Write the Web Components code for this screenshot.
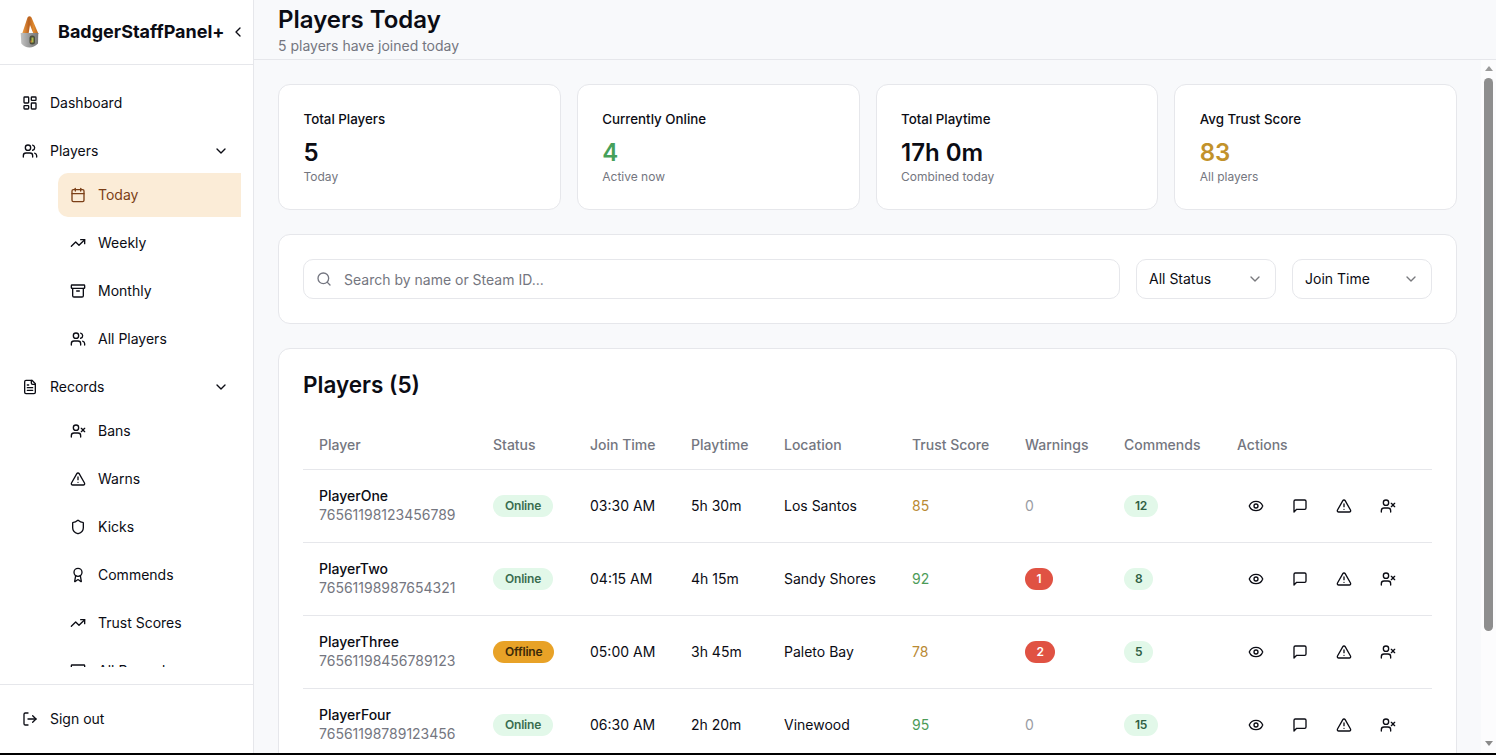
<!DOCTYPE html>
<html lang="en"><head><meta charset="utf-8"><title>Players Today</title>
<style>
html,body{margin:0;height:100%;overflow:hidden;background:#000}
body{font-family:Inter,"Liberation Sans",sans-serif;color:#0b0c14}
</style></head><body>
<app-shell>
  <side-bar slot="side"></side-bar>
  <page-header slot="head" title="Players Today" sub="5 players have joined today"></page-header>
  <stat-card label="Total Players" value="5" note="Today"></stat-card>
  <stat-card label="Currently Online" value="4" note="Active now" tone="#46a05a"></stat-card>
  <stat-card label="Total Playtime" value="17h 0m" note="Combined today"></stat-card>
  <stat-card label="Avg Trust Score" value="83" note="All players" tone="#c2922b"></stat-card>
  <filter-bar slot="filters"></filter-bar>
  <players-table slot="table"></players-table>
  <scroll-rail slot="rail"></scroll-rail>
</app-shell>
<script>
const I={
dash:'<rect width="7" height="9" x="3" y="3" rx="1"/><rect width="7" height="5" x="14" y="3" rx="1"/><rect width="7" height="9" x="14" y="12" rx="1"/><rect width="7" height="5" x="3" y="16" rx="1"/>',
users:'<path d="M16 21v-2a4 4 0 0 0-4-4H6a4 4 0 0 0-4 4v2"/><circle cx="9" cy="7" r="4"/><path d="M22 21v-2a4 4 0 0 0-3-3.87"/><path d="M16 3.13a4 4 0 0 1 0 7.75"/>',
down:'<path d="m6 9 6 6 6-6"/>',left:'<path d="m15 18-6-6 6-6"/>',
cal:'<path d="M8 2v4"/><path d="M16 2v4"/><rect width="18" height="18" x="3" y="4" rx="2"/><path d="M3 10h18"/>',
trend:'<polyline points="22 7 13.5 15.5 8.5 10.5 2 17"/><polyline points="16 7 22 7 22 13"/>',
archive:'<rect width="20" height="5" x="2" y="3" rx="1"/><path d="M4 8v11a2 2 0 0 0 2 2h12a2 2 0 0 0 2-2V8"/><path d="M10 12h4"/>',
file:'<path d="M15 2H6a2 2 0 0 0-2 2v16a2 2 0 0 0 2 2h12a2 2 0 0 0 2-2V7Z"/><path d="M14 2v4a2 2 0 0 0 2 2h4"/><path d="M10 9H8"/><path d="M16 13H8"/><path d="M16 17H8"/>',
userx:'<path d="M16 21v-2a4 4 0 0 0-4-4H6a4 4 0 0 0-4 4v2"/><circle cx="9" cy="7" r="4"/><line x1="17" x2="22" y1="8" y2="13"/><line x1="22" x2="17" y1="8" y2="13"/>',
warn:'<path d="m21.73 18-8-14a2 2 0 0 0-3.48 0l-8 14A2 2 0 0 0 4 21h16a2 2 0 0 0 1.73-3"/><path d="M12 9v4"/><path d="M12 17h.01"/>',
shield:'<path d="M20 13c0 5-3.5 7.5-7.66 8.95a1 1 0 0 1-.67-.01C7.5 20.5 4 18 4 13V6a1 1 0 0 1 1-1c2 0 4.5-1.2 6.24-2.72a1.17 1.17 0 0 1 1.52 0C14.51 3.81 17 5 19 5a1 1 0 0 1 1 1z"/>',
award:'<path d="m15.477 12.89 1.515 8.526a.5.5 0 0 1-.81.47l-3.58-2.687a1 1 0 0 0-1.197 0l-3.586 2.686a.5.5 0 0 1-.81-.469l1.514-8.526"/><circle cx="12" cy="8" r="6"/>',
out:'<path d="M9 21H5a2 2 0 0 1-2-2V5a2 2 0 0 1 2-2h4"/><polyline points="16 17 21 12 16 7"/><line x1="21" x2="9" y1="12" y2="12"/>',
eye:'<path d="M2.062 12.348a1 1 0 0 1 0-.696 10.75 10.75 0 0 1 19.876 0 1 1 0 0 1 0 .696 10.75 10.75 0 0 1-19.876 0"/><circle cx="12" cy="12" r="3"/>',
msg:'<path d="M21 15a2 2 0 0 1-2 2H7l-4 4V5a2 2 0 0 1 2-2h14a2 2 0 0 1 2 2z"/>',
search:'<circle cx="11" cy="11" r="8"/><path d="m21 21-4.3-4.3"/>'};
const ico=(n,s=16,c='currentColor')=>`<svg xmlns="http://www.w3.org/2000/svg" width="${s}" height="${s}" viewBox="0 0 24 24" fill="none" stroke="${c}" stroke-width="2" stroke-linecap="round" stroke-linejoin="round" style="display:block;flex:none">${I[n]}</svg>`;
class Base extends HTMLElement{
  constructor(){super();this.attachShadow({mode:'open'})}
  connectedCallback(){this.shadowRoot.innerHTML=this.render()}
  a(n){return this.getAttribute(n)||''}
}
customElements.define('app-shell',class extends Base{render(){return `<style>
:host{display:grid;grid-template-columns:254px 1fr;height:753px;background:#f8f9fb}
.side{min-height:0;display:flex}
.main{display:flex;flex-direction:column;min-width:0;min-height:0;height:753px}
.body{flex:1;min-height:0;display:flex}
.scroll{flex:1;min-width:0;min-height:0;overflow:hidden;padding:24px;box-sizing:border-box;display:flex;flex-direction:column;gap:24px;background:#f8f9fb}
.stats{display:grid;grid-template-columns:repeat(4,1fr);gap:16px;flex:none}
::slotted([slot=filters]),::slotted([slot=table]){flex:none}
</style>
<div class="side"><slot name="side"></slot></div>
<div class="main"><slot name="head"></slot>
<div class="body"><div class="scroll"><div class="stats"><slot></slot></div><slot name="filters"></slot><slot name="table"></slot></div><slot name="rail"></slot></div></div>`}});
customElements.define('scroll-rail',class extends Base{render(){return `<style>
:host{display:flex;flex-direction:column;align-items:center;width:15px;flex:none;background:#fcfcfd;padding:6px 0 7px;box-sizing:border-box}
.t{width:0;height:0;border-left:4.5px solid transparent;border-right:4.5px solid transparent;flex:none}
.u{border-bottom:5px solid #9a9a9a;margin-bottom:7px}
.d{border-top:5px solid #8a8a8a;margin-top:auto}
.th{width:9px;height:553px;border-radius:4.5px;background:#8e8e8e;flex:none}
</style><div class="t u"></div><div class="th"></div><div class="t d"></div>`}});
customElements.define('nav-item',class extends Base{render(){
 const sub=this.hasAttribute('sub'),act=this.hasAttribute('active'),chev=this.hasAttribute('chev');
 return `<style>
:host{display:flex;align-items:center;height:44px;flex:none;box-sizing:border-box;font-size:14px;line-height:20px;color:#0b0c14;border-radius:10px;gap:12px;
 padding:0 12px 0 10px;margin-left:${sub?'46px':'0'};${sub?'padding-left:12px;':''}${act?'background:#fbecd7;color:#7b3f17;border-top-right-radius:0;border-bottom-right-radius:0;':''}}
span{flex:1;white-space:nowrap}
</style>${ico(this.a('icon'))}<span><slot></slot></span>${chev?ico('down'):''}`}});
customElements.define('side-bar',class extends Base{render(){return `<style>
:host{display:flex;flex-direction:column;width:254px;height:753px;box-sizing:border-box;background:#fff;border-right:1px solid #e6e7eb}
.brand{height:65px;box-sizing:border-box;border-bottom:1px solid #e6e7eb;display:flex;align-items:center;flex:none;padding:0 8px 0 19px}
.brand svg.l{margin-right:19px;flex:none}
.brand b{font-size:18px;font-weight:700;line-height:28px;white-space:nowrap;color:#0b0c14;margin-right:5px}
.nav{height:602px;overflow:hidden;flex:none;box-sizing:border-box;padding:16px 12px 0;display:flex;flex-direction:column}
.g{height:4px;flex:none}
.foot{margin-top:17px;border-top:1px solid #e6e7eb;padding:12px;flex:1;box-sizing:border-box}
</style>
<div class="brand"><svg class="l" width="20" height="32" viewBox="0 0 20 32" role="img" aria-label="Logo">
<defs><linearGradient id="o" x1="0" x2="1" y1="0" y2="0"><stop offset="0" stop-color="#eea24a"/><stop offset=".42" stop-color="#b9601e"/><stop offset=".7" stop-color="#e08a2e"/><stop offset="1" stop-color="#b8651f"/></linearGradient><linearGradient id="g" x1="0" x2="1"><stop offset="0" stop-color="#c4c4c4"/><stop offset=".55" stop-color="#929292"/><stop offset="1" stop-color="#787878"/></linearGradient></defs>
<path d="M3 18 8.500 1.500Q10.500-.8 12.500 1.500L19.500 18H14.500L11 9 9.500 18z" fill="url(#o)"/>
<path d="M1.700 17H19.300L19 27.500Q15 31.500 10.500 31.500 5.500 31.500 2.300 27.500z" fill="url(#g)"/>
<rect x="10.500" y="19.500" width="5.500" height="9" rx="2.500" fill="#4a4d3a"/><rect x="12.500" y="21.500" width="2" height="5" fill="#aebc4a"/><rect x="11.500" y="24.500" width="1.500" height="2" fill="#c9843a"/></svg>
<b>BadgerStaffPanel+</b>${ico('left')}</div>
<div class="nav">
<nav-item icon="dash">Dashboard</nav-item><div class="g"></div>
<nav-item icon="users" chev>Players</nav-item>
<nav-item icon="cal" sub active>Today</nav-item><div class="g"></div>
<nav-item icon="trend" sub>Weekly</nav-item><div class="g"></div>
<nav-item icon="archive" sub>Monthly</nav-item><div class="g"></div>
<nav-item icon="users" sub>All Players</nav-item><div class="g"></div>
<nav-item icon="file" chev>Records</nav-item>
<nav-item icon="userx" sub>Bans</nav-item><div class="g"></div>
<nav-item icon="warn" sub>Warns</nav-item><div class="g"></div>
<nav-item icon="shield" sub>Kicks</nav-item><div class="g"></div>
<nav-item icon="award" sub>Commends</nav-item><div class="g"></div>
<nav-item icon="trend" sub>Trust Scores</nav-item><div class="g"></div>
<nav-item icon="archive" sub>All Records</nav-item>
</div>
<div class="foot"><nav-item icon="out">Sign out</nav-item></div>`}});
customElements.define('page-header',class extends Base{render(){return `<style>
:host{display:block;height:60px;flex:none;box-sizing:border-box;border-bottom:1px solid #e6e7eb;background:#f8f9fb;padding:4px 24px 0}
h1{margin:0;font-size:24px;line-height:32px;font-weight:600;color:#0b0c14}
p{margin:0;font-size:14px;line-height:20px;color:#747680}
</style><h1>${this.a('title')}</h1><p>${this.a('sub')}</p>`}});
customElements.define('stat-card',class extends Base{render(){const t=this.a('tone')||'#0b0c14';return `<style>
:host{display:block;height:126px;box-sizing:border-box;background:#fff;border:1px solid #e6e7eb;border-radius:12px;padding:24px 24px 0 24.500px}
.l{font-size:13.330px;line-height:20px;font-weight:500;color:#0b0c14;height:20px}
.v{font-size:24px;line-height:32px;font-weight:600;margin-top:8px;color:${t}}
.n{font-size:12px;line-height:16px;color:#747680;margin-top:0}
</style><div class="l">${this.a('label')}</div><div class="v">${this.a('value')}</div><div class="n">${this.a('note')}</div>`}});
customElements.define('select-box',class extends Base{render(){return `<style>
:host{display:flex;align-items:center;justify-content:space-between;width:140px;height:40px;box-sizing:border-box;border:1px solid #e6e7eb;border-radius:10px;padding:0 12px;font-size:14px;background:#fff;color:#0b0c14;flex:none}
svg{opacity:.55}
span{margin-top:-1px}
</style><span><slot></slot></span>${ico('down')}`}});
customElements.define('filter-bar',class extends Base{render(){return `<style>
:host{display:flex;gap:16px;height:90px;box-sizing:border-box;background:#fff;border:1px solid #e6e7eb;border-radius:12px;padding:24px}
.s{flex:1;display:flex;align-items:center;gap:12px;height:40px;box-sizing:border-box;border:1px solid #e6e7eb;border-radius:10px;padding:0 12px;font-size:14px;color:#747680}
</style><div class="s">${ico('search',16,'#747680')}<span>Search by name or Steam ID...</span></div>
<select-box>All Status</select-box><select-box>Join Time</select-box>`}});
const rows=[
['PlayerOne','76561198123456789','Online','03:30 AM','5h 30m','Los Santos',85,0,12],
['PlayerTwo','76561198987654321','Online','04:15 AM','4h 15m','Sandy Shores',92,1,8],
['PlayerThree','76561198456789123','Offline','05:00 AM','3h 45m','Paleto Bay',78,2,5],
['PlayerFour','76561198789123456','Online','06:30 AM','2h 20m','Vinewood',95,0,15],
['PlayerFive','76561198321654987','Online','07:45 AM','1h 10m','Del Perro',65,0,3]];
customElements.define('players-table',class extends Base{render(){
const w=[174,97,101,93,128,113,99,113,211];
return `<style>
:host{display:block;box-sizing:border-box;background:#fff;border:1px solid #e6e7eb;border-radius:12px;padding:24px}
h2{margin:0;font-size:22.500px;line-height:24px;font-weight:600;color:#0b0c14;height:24px;margin-bottom:24px}
table{border-collapse:collapse;table-layout:fixed;width:1129px;font-size:14px}
th{height:48px;padding:0 16px;text-align:left;font-weight:500;color:#747680;line-height:20px;border-bottom:1px solid #e6e7eb;white-space:nowrap;box-sizing:border-box}
td{height:73px;padding:0 16px;box-sizing:border-box;border-bottom:1px solid #e6e7eb;line-height:20px;white-space:nowrap}
tr:last-child td{border-bottom:0}
.n{font-weight:500;color:#0b0c14;line-height:20px;display:block}
.id{color:#747680;display:block;line-height:20px;margin-top:-1px}
.b{display:inline-block;vertical-align:middle;font-size:12px;line-height:16px;font-weight:600;padding:3px 12px;border-radius:999px;letter-spacing:-.2px}
.on{background:#e2f8e9;color:#3a6d50}.off{background:#e8a227;color:#3d2a08}
.red{background:#e05243;color:#fff;padding:3px 11.500px}.gr{background:#e2f8e9;color:#2f5f44;padding:3px 11px}
.acts{display:flex;gap:12px;margin-left:3px}.acts i{display:flex;width:32px;height:32px;align-items:center;justify-content:center}
</style><h2>Players (5)</h2><table><colgroup>${w.map(x=>`<col style="width:${x}px">`).join('')}</colgroup>
<thead><tr>${['Player','Status','Join Time','Playtime','Location','Trust Score','Warnings','Commends','Actions'].map(h=>`<th>${h}</th>`).join('')}</tr></thead>
<tbody>${rows.map(r=>`<tr><td><span class="n">${r[0]}</span><span class="id">${r[1]}</span></td>
<td><span class="b ${r[2]=='Online'?'on':'off'}">${r[2]}</span></td><td>${r[3]}</td><td>${r[4]}</td><td>${r[5]}</td>
<td style="color:${r[6]>=90?'#4c9b58':r[6]>=70?'#b98a33':'#d1553f'}">${r[6]}</td>
<td>${r[7]?`<span class="b red">${r[7]}</span>`:'<span style="color:#9a9ca3">0</span>'}</td>
<td><span class="b gr">${r[8]}</span></td>
<td><div class="acts">${['eye','msg','warn','userx'].map(i=>`<i>${ico(i)}</i>`).join('')}</div></td></tr>`).join('')}</tbody></table>`}});
</script>
</body></html>
